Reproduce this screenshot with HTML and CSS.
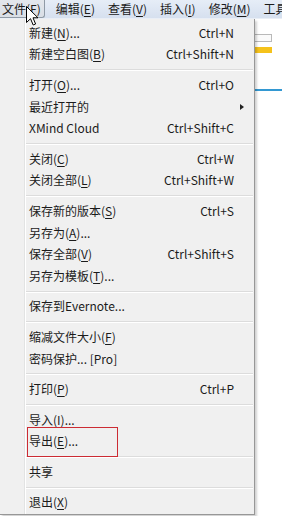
FILE: index.html
```html
<!DOCTYPE html>
<html lang="zh">
<head>
<meta charset="utf-8">
<link rel="stylesheet" href="styles.css">
</head>
<body>
<div class="menubar">
  <span class="mb-item active">文件(<u>F</u>)</span>
  <span class="mb-item">编辑(<u>E</u>)</span>
  <span class="mb-item">查看(<u>V</u>)</span>
  <span class="mb-item">插入(<u>I</u>)</span>
  <span class="mb-item">修改(<u>M</u>)</span>
  <span class="mb-item">工具</span>
</div>
<div class="canvas">
  <div class="topic-box"></div>
  <div class="topic-bar"></div>
  <div class="connector"></div>
</div>
<div class="dropdown">
  <div class="row"><span>新建(<u>N</u>)...</span><span>Ctrl+N</span></div>
  <div class="row"><span>新建空白图(<u>B</u>)</span><span>Ctrl+Shift+N</span></div>
  <div class="sep"></div>
  <div class="row"><span>打开(<u>O</u>)...</span><span>Ctrl+O</span></div>
  <div class="row"><span>最近打开的</span><span class="arrow"></span></div>
  <div class="row"><span>XMind Cloud</span><span>Ctrl+Shift+C</span></div>
  <div class="sep"></div>
  <div class="row"><span>关闭(<u>C</u>)</span><span>Ctrl+W</span></div>
  <div class="row"><span>关闭全部(<u>L</u>)</span><span>Ctrl+Shift+W</span></div>
  <div class="sep"></div>
  <div class="row"><span>保存新的版本(<u>S</u>)</span><span>Ctrl+S</span></div>
  <div class="row"><span>另存为(<u>A</u>)...</span></div>
  <div class="row"><span>保存全部(<u>V</u>)</span><span>Ctrl+Shift+S</span></div>
  <div class="row"><span>另存为模板(<u>T</u>)...</span></div>
  <div class="sep"></div>
  <div class="row"><span>保存到Evernote...</span></div>
  <div class="sep"></div>
  <div class="row"><span>缩减文件大小(<u>F</u>)</span></div>
  <div class="row"><span>密码保护... [Pro]</span></div>
  <div class="sep"></div>
  <div class="row"><span>打印(<u>P</u>)</span><span>Ctrl+P</span></div>
  <div class="sep"></div>
  <div class="row"><span>导入(<u>I</u>)...</span></div>
  <div class="row highlight-row"><span>导出(<u>E</u>)...</span><span class="redbox"></span></div>
  <div class="sep"></div>
  <div class="row"><span>共享</span></div>
  <div class="sep"></div>
  <div class="row"><span>退出(<u>X</u>)</span></div>
</div>
<svg class="cursor" width="13" height="20" viewBox="0 0 13 20">
  <path d="M0.5 0.5 L0.5 16.5 L4.5 12.7 L7.2 19 L9.6 18 L7 11.8 L12 11.8 Z" fill="#fff" stroke="#000" stroke-width="1" stroke-linejoin="miter"/>
</svg>
</body>
</html>
```
FILE: styles.css
```css
* { box-sizing: border-box; }
html, body {
  margin: 0;
  padding: 0;
  width: 282px;
  height: 516px;
  overflow: hidden;
  background: #fff;
  font-family: "Noto Sans CJK SC", "Noto Sans", sans-serif;
  font-size: 12px;
  color: #1b1b1b;
  position: relative;
}
u { text-decoration: underline; text-underline-offset: 2px; text-decoration-thickness: 1px; }

.menubar {
  height: 19px;
  display: flex;
  align-items: center;
  white-space: nowrap;
  overflow: hidden;
  background: linear-gradient(#e6edf7, #d6e0ef);
  border-bottom: 1px solid #e9eef6;
}
.mb-item {
  height: 18px;
  line-height: 17px;
  padding: 0 6px;
  margin-right: 1px;
  flex: none;
}
.mb-item.active {
  border: 1px solid #8f9aa6;
  border-top: none;
  border-left: none;
  border-radius: 0 0 3px 0;
  background: linear-gradient(#e3e7ec, #d9dee6);
  padding: 0 3px 0 2px;
  margin-right: 5px;
}

.canvas {
  padding-left: 254px;
}
.topic-box {
  margin-top: 15px;
  width: 18px;
  height: 8px;
  border: 1px solid #b9b9b9;
  background: #fafafa;
}
.topic-bar {
  margin-top: 5px;
  width: 18px;
  height: 6px;
  background: #f5c21b;
}
.connector {
  margin-top: 36px;
  width: 28px;
  height: 2px;
  background: #3398d2;
}

.dropdown {
  position: absolute;
  top: 19px;
  left: 0;
  width: 255px;
  padding: 3px 0 1px 0;
  border-right: 1px solid #979797;
  border-bottom: 1px solid #979797;
  box-shadow: 2px 2px 2px rgba(0,0,0,0.18);
  background: linear-gradient(to right, #f0f0f0 24px, #e2e3e3 24px, #e2e3e3 25px, #ffffff 25px, #ffffff 26px, #f0f0f0 26px);
}
.row {
  position: relative;
  height: 21.6px;
  display: flex;
  align-items: center;
  justify-content: space-between;
  padding: 0 20px 0 29px;
  white-space: nowrap;
  line-height: 16px;
}
.sep {
  height: 9px;
  margin: 0 1px 0 26px;
  background: linear-gradient(#f0f0f0 4px, #dcdcdc 4px, #dcdcdc 5px, #ffffff 5px, #ffffff 6px, #f0f0f0 6px);
}
.arrow {
  width: 0;
  height: 0;
  border-top: 3.5px solid transparent;
  border-bottom: 3.5px solid transparent;
  border-left: 4px solid #222;
  margin-right: -10px;
}
.redbox {
  position: absolute;
  left: 27px;
  top: -4px;
  width: 91px;
  height: 30px;
  border: 1px solid #cc2b33;
}
.cursor {
  position: absolute;
  left: 26px;
  top: 6px;
}
```
